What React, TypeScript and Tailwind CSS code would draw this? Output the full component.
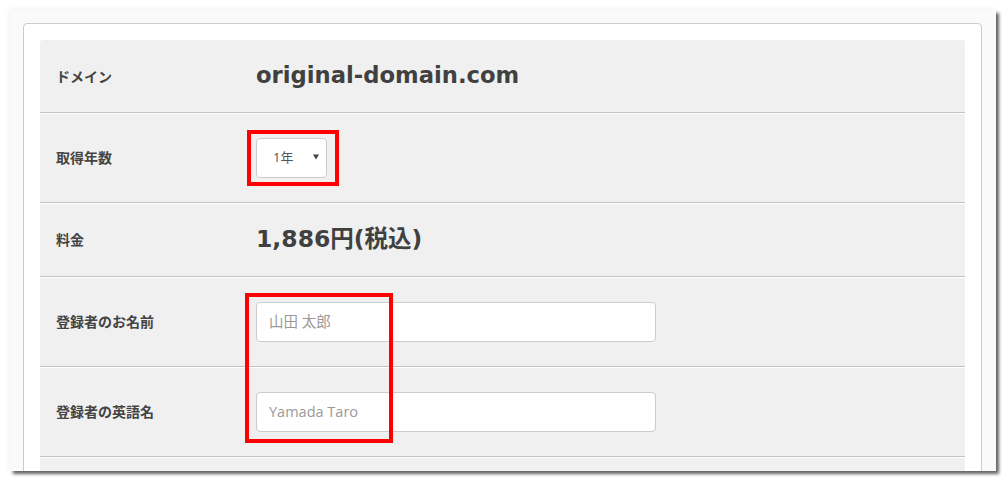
import React from "react";

const font = { fontFamily: '"Open Sans", "Noto Sans CJK JP", sans-serif' };
const heading = { fontFamily: '"DejaVu Sans", "Noto Sans CJK JP", sans-serif' };

function Row({ h, label, children }: { h: string; label: string; children: React.ReactNode }) {
  return (
    <div className={`flex items-center border-b border-[#c2c2c2] shadow-[0_1px_0_#ffffff] ${h}`}>
      <div className="w-[216px] shrink-0 pl-4 text-[14px] font-bold text-[#444]">{label}</div>
      <div className="flex-1">{children}</div>
    </div>
  );
}

export default function App() {
  return (
    <div className="relative h-[482px] w-[1007px] overflow-hidden bg-white" style={font}>
      <div className="absolute left-[10px] top-[10px] h-[461px] w-[986px] bg-[#fafafa] shadow-[3px_3px_3px_rgba(0,0,0,0.6),0_0_6px_rgba(0,0,0,0.08)]" />
      <div className="relative pl-[10px] pt-[10px]">
        <div className="h-[461px] w-[986px] overflow-hidden pl-[13px] pr-[14px] pt-[13px]">
          <div className="h-[500px] rounded-t-[4px] border border-[#cccccc] bg-white px-4 pt-4">
            <div className="rounded-t-[3px] bg-[#f0f0f0]">
              <Row h="h-[73px]" label="ドメイン">
                <div className="pb-[2px] text-[22.7px] font-bold leading-none text-[#404040]" style={heading}>original-domain.com</div>
              </Row>
              <Row h="h-[90px]" label="取得年数">
                <div className="flex h-[40px] w-[71px] items-center justify-between rounded-[4px] border border-[#cccccc] bg-white pl-[16px] pr-[7px]">
                  <span className="text-[13px] text-[#555]">1年</span>
                  <svg width="6" height="6" viewBox="0 0 6 6" className="mb-[1px]">
                    <path d="M0 0.5 L6 0.5 L3 5.5 Z" fill="#444" />
                  </svg>
                </div>
              </Row>
              <Row h="h-[74px]" label="料金">
                <div className="text-[23.5px] font-bold leading-none text-[#404040]" style={heading}>1,886円(税込)</div>
              </Row>
              <Row h="h-[90px]" label="登録者のお名前">
                <div className="flex h-[40px] w-[400px] items-center rounded-[4px] border border-[#cccccc] bg-white px-3 text-[14.5px] text-[#999]">
                  山田 太郎
                </div>
              </Row>
              <Row h="h-[90px]" label="登録者の英語名">
                <div className="flex h-[40px] w-[400px] items-center rounded-[4px] border border-[#cccccc] bg-white px-3 text-[14.5px] text-[#999]">
                  Yamada Taro
                </div>
              </Row>
              <div className="h-[60px]" />
            </div>
          </div>
        </div>
      </div>
      <div className="absolute left-[247px] top-[130px] h-[56px] w-[92px] border-4 border-[#ff0000]" />
      <div className="absolute left-[245px] top-[293px] h-[150px] w-[148px] border-4 border-[#ff0000]" />
    </div>
  );
}
